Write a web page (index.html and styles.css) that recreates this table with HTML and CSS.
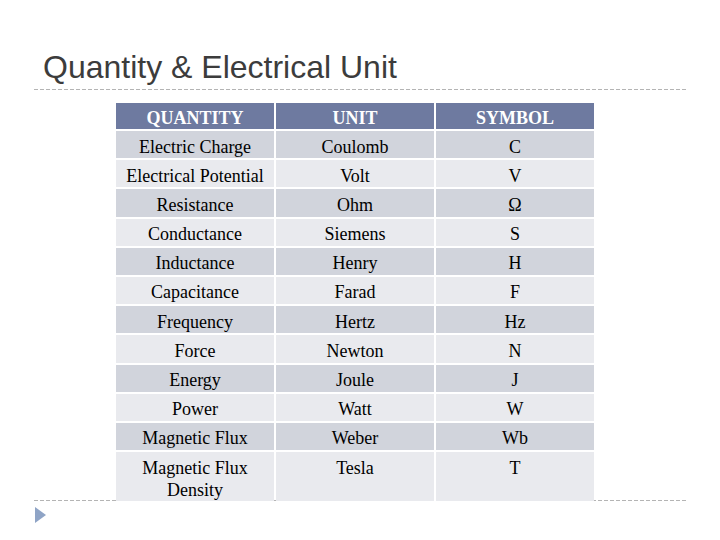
FILE: index.html
```html
<!DOCTYPE html>
<html>
<head>
<meta charset="utf-8">
<link rel="stylesheet" href="styles.css">
</head>
<body>
<div class="slide">
  <h1 class="title">Quantity &amp; Electrical Unit</h1>
  <div class="rule rule-top"></div>
  <table class="units">
    <thead>
      <tr><th>QUANTITY</th><th>UNIT</th><th>SYMBOL</th></tr>
    </thead>
    <tbody>
      <tr><td>Electric Charge</td><td>Coulomb</td><td>C</td></tr>
      <tr><td>Electrical Potential</td><td>Volt</td><td>V</td></tr>
      <tr><td>Resistance</td><td>Ohm</td><td>Ω</td></tr>
      <tr><td>Conductance</td><td>Siemens</td><td>S</td></tr>
      <tr><td>Inductance</td><td>Henry</td><td>H</td></tr>
      <tr><td>Capacitance</td><td>Farad</td><td>F</td></tr>
      <tr><td>Frequency</td><td>Hertz</td><td>Hz</td></tr>
      <tr><td>Force</td><td>Newton</td><td>N</td></tr>
      <tr><td>Energy</td><td>Joule</td><td>J</td></tr>
      <tr><td>Power</td><td>Watt</td><td>W</td></tr>
      <tr><td>Magnetic Flux</td><td>Weber</td><td>Wb</td></tr>
      <tr><td>Magnetic Flux<br>Density</td><td>Tesla</td><td>T</td></tr>
    </tbody>
  </table>
  <div class="rule rule-bottom"></div>
  <div class="bullet"></div>
</div>
</body>
</html>
```
FILE: styles.css
```css
html, body {
  margin: 0;
  padding: 0;
  background: #ffffff;
}

.slide {
  width: 720px;
  height: 540px;
  overflow: hidden;
}

.title {
  margin: 51px 0 0 43px;
  font-family: "Liberation Sans", Arial, sans-serif;
  font-weight: normal;
  font-size: 32px;
  line-height: 32px;
  color: #3c3c3c;
}

.rule {
  height: 1px;
  margin-left: 34px;
  width: 652px;
  background: repeating-linear-gradient(to right, #b4b4b4 0 4px, transparent 4px 6px);
}

.rule-top {
  margin-top: 6px;
}

.units {
  margin: 11px 0 0 114px;
  border-collapse: separate;
  border-spacing: 2px;
  font-family: "Liberation Serif", "Times New Roman", serif;
  font-size: 18px;
  line-height: 22px;
  color: #000;
  position: relative;
  z-index: 1;
}

.units th,
.units td {
  width: 158px;
  padding: 4.5px 0 0.7px;
  text-align: center;
  vertical-align: top;
}

.units th {
  background: #6e7aa0;
  color: #ffffff;
  font-weight: bold;
  padding: 3.5px 0 0.5px;
}

.units tbody tr:nth-child(odd) td {
  background: #d1d4dc;
}

.units tbody tr:nth-child(even) td {
  background: #e9eaee;
}

.rule-bottom {
  margin-top: -3px;
  position: relative;
  z-index: 0;
}

.bullet {
  margin: 6px 0 0 35px;
  width: 0;
  height: 0;
  border-top: 8px solid transparent;
  border-bottom: 8px solid transparent;
  border-left: 11px solid #8fa4c6;
}
```
